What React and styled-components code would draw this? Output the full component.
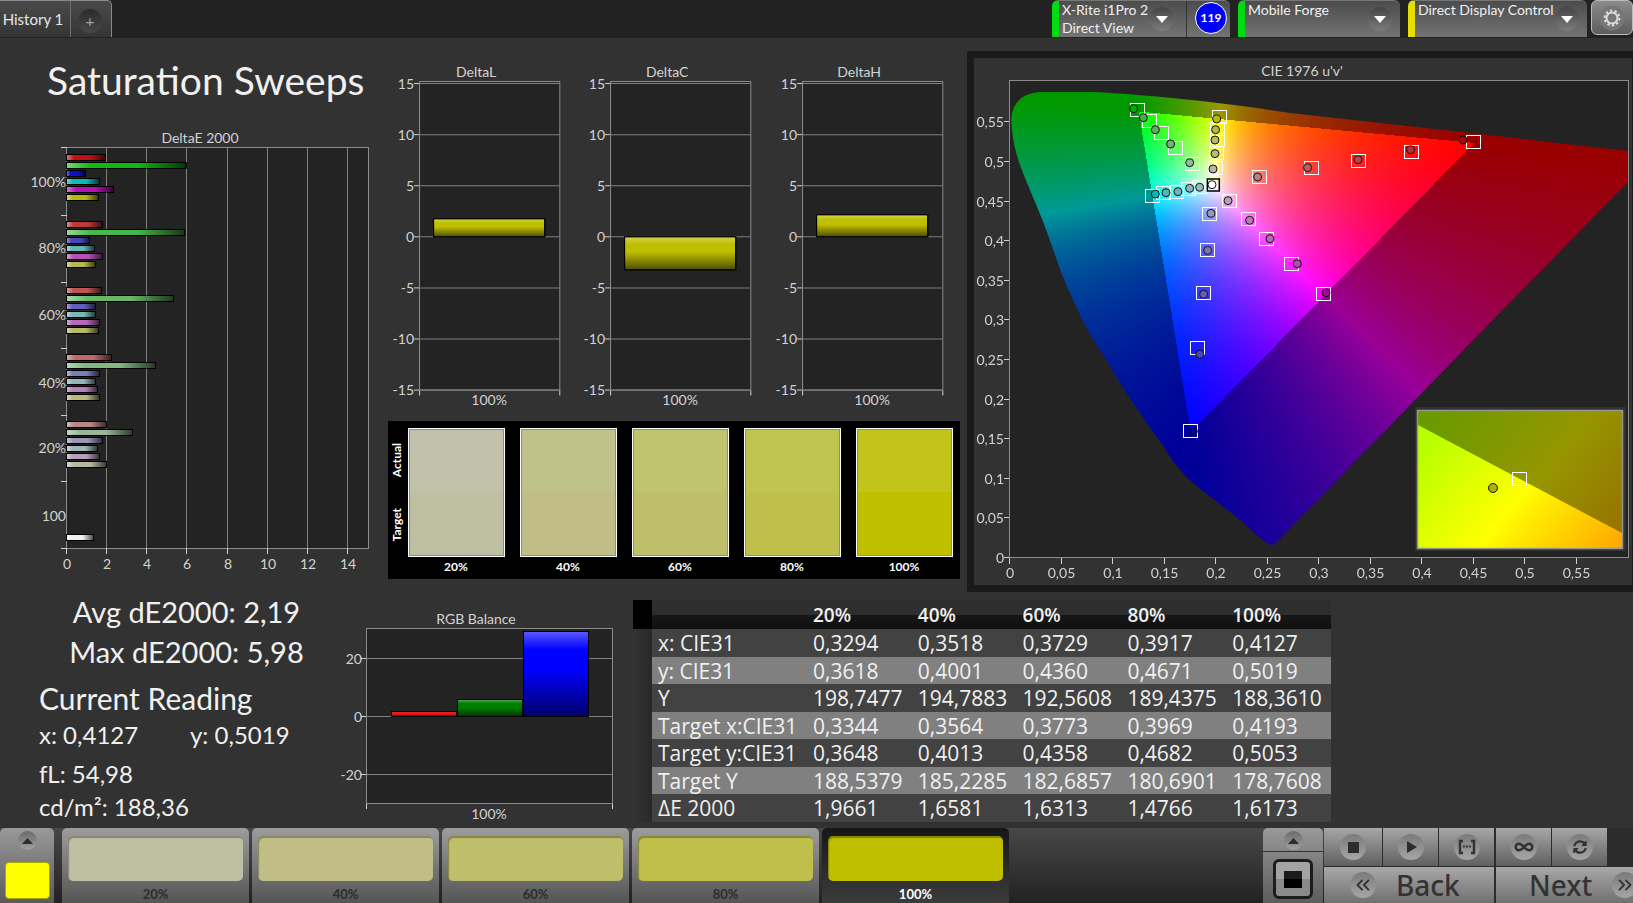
import React, { useLayoutEffect, useRef } from "react";
import styled, { createGlobalStyle } from "styled-components";
import { ChevronsLeft, ChevronsRight, Infinity as InfinityIcon } from "lucide-react";
import { FaSyncAlt } from "react-icons/fa";

const GlobalStyle = createGlobalStyle`
  *, *::before, *::after { box-sizing: border-box; }
  body {
    margin: 0;
    background: #323232;
    color: #f0f0f0;
    font-family: Lato, "Open Sans", sans-serif;
    overflow-x: hidden;
  }
  button { font: inherit; color: inherit; border: 0; padding: 0; cursor: pointer; }
  h1, h2, p { margin: 0; font-weight: 400; }
`;

/* ---------- page frame ---------- */

const Page = styled.div`
  display: flex;
  flex-direction: column;
  min-height: 100vh;
`;

const Main = styled.main`
  flex: 1;
`;

const UpperArea = styled.section`
  display: grid;
  grid-template-columns: minmax(0, 388fr) minmax(0, 572fr) 7px minmax(0, 666fr);
  align-items: start;
`;

const LowerArea = styled.section`
  display: grid;
  grid-template-columns: minmax(0, 340fr) minmax(0, 293fr) minmax(0, 698fr) minmax(0, 302fr);
  align-items: start;
  padding-top: 8px;
`;

/* ---------- top bar ---------- */

const TopBar = styled.header`
  display: flex;
  justify-content: space-between;
  height: 38px;
  background: #222;
`;

const Tabs = styled.nav`
  display: flex;
  height: 37px;
  border-top: 1px solid #8a8a8a;
  border-right: 1px solid #8a8a8a;
  border-top-right-radius: 5px;
  background: linear-gradient(#4a4a4a, #353535);
`;

const Tab = styled.button`
  width: 71px;
  padding-right: 4px;
  border-right: 1px solid #6e6e6e;
  background: none;
  color: #e6e6e6;
  font-size: 15px;
  white-space: nowrap;
`;

const AddTab = styled.button`
  width: 24px;
  height: 24px;
  margin: 8px 9px 0 7px;
  border-radius: 50%;
  background: linear-gradient(#2c2c2c, #484848);
  color: #a0a0a0;
  font-size: 16px;
  line-height: 24px;
`;

const Devices = styled.div`
  display: flex;
  align-items: flex-start;
  height: 37px;
`;

const Device = styled.div`
  display: flex;
  width: ${(p) => p.$width}px;
  height: 37px;
  margin-right: ${(p) => p.$gap}px;
  border-top: 1px solid #777;
  border-left: 7px solid ${(p) => p.$status};
  border-radius: 6px 6px 0 0;
  background: linear-gradient(#4c4c4c, #747474);
`;

const DeviceButton = styled.button`
  display: flex;
  flex: 1;
  min-width: 0;
  justify-content: space-between;
  padding: 0 ${(p) => (p.$split ? 12 : 8)}px 0 3px;
  background: none;
  text-align: left;
  font-size: 14px;
  line-height: 18px;
  white-space: nowrap;
`;

const DeviceName = styled.span`
  width: 88px;
`;

const RoundArrow = styled.span`
  display: flex;
  flex: none;
  align-items: center;
  justify-content: center;
  width: 24px;
  height: 24px;
  margin-top: 6px;
  border-radius: 50%;
  background: linear-gradient(#444, #7c7c7c);
`;

const BadgeSlot = styled.div`
  width: 44px;
  padding: 1px 0 0 8px;
  border-left: 1px solid #333;
`;

const Badge = styled.span`
  display: block;
  width: 32px;
  height: 32px;
  border: 1px solid #fff;
  border-radius: 50%;
  background: #00f;
  color: #fff;
  font-size: 12px;
  font-weight: 700;
  line-height: 30px;
  text-align: center;
`;

const SettingsButton = styled.button`
  display: flex;
  align-items: center;
  justify-content: center;
  width: 42px;
  height: 35px;
  border: 1px solid #bbb;
  border-radius: 6px;
  background: linear-gradient(#8c8c8c, #5c5c5c);
`;

/* ---------- left column ---------- */

const Title = styled.h1`
  padding: 14px 0 0 47px;
  height: 88px;
  font-size: 39px;
  line-height: 56px;
  white-space: nowrap;
`;

const Chart = styled.svg`
  display: block;
  width: 100%;
  height: auto;
  text {
    font-family: Lato, "Open Sans", sans-serif;
    font-size: 14px;
    fill: #d2d2d2;
  }
`;

/* ---------- middle column ---------- */

const Middle = styled.div`
  padding-top: 22px;
`;

const DeltaRow = styled.div`
  display: grid;
  grid-template-columns: repeat(3, minmax(0, 1fr));
  margin-right: -2px;
`;

const SwatchPanel = styled.div`
  display: grid;
  grid-template-columns: 12px repeat(5, minmax(0, 1fr));
  margin-top: 4px;
  height: 158px;
  padding-top: 7px;
  background: #000;
  color: #fff;
  font-size: 12px;
  font-weight: 700;
`;

const SideLabels = styled.div`
  display: flex;
  flex-direction: column;
  justify-content: space-around;
  align-items: center;
  width: 17px;
  height: 129px;
  line-height: 14px;
  span { writing-mode: vertical-rl; transform: rotate(180deg); }
`;

const SwatchItem = styled.div`
  text-align: center;
  line-height: 20px;
`;

const Comparison = styled.div`
  height: 129px;
  margin: 0 7px 0 8px;
  border: 1px solid #fff;
  box-shadow: inset 0 0 0 1px #8f8f70;
  background: linear-gradient(${(p) => p.$actual} 50%, ${(p) => p.$target} 50%);
`;

/* ---------- chromaticity ---------- */

const CiePanel = styled.div`
  margin-top: 13px;
  border: 7px solid #1a1a1a;
  border-right-width: 1px;
`;

const SpectrumCanvas = styled.canvas`
  display: block;
  width: 619px;
  height: 476px;
`;

/* ---------- lower area ---------- */

const Stats = styled.div`
  padding-left: 39px;
  font-size: 24px;
  line-height: 33px;
  white-space: nowrap;
`;

const Summary = styled.div`
  margin: -8px 6px 0 0;
  font-size: 29px;
  line-height: 40px;
  text-align: center;
`;

const ReadingTitle = styled.h2`
  padding-top: 6px;
  font-size: 30px;
  line-height: 40px;
`;

const ReadingRow = styled.div`
  display: flex;
  margin-bottom: 6px;
  span { flex: 0 0 151px; }
`;

const DataTable = styled.table`
  width: 100%;
  table-layout: fixed;
  border-collapse: collapse;
  font-family: "Open Sans", "Noto Sans", sans-serif;
  font-size: 21px;
  color: #f0f0f0;
  th, td { padding: 0 0 0 6px; text-align: left; font-weight: 400; line-height: 26px; white-space: nowrap; }
  thead th {
    height: 29px;
    font-size: 19px;
    font-weight: 600;
    background: linear-gradient(#2e2e2e 50%, #171717 50%, #101010);
  }
  thead th:first-child { background: #000; }
  tbody td:first-child { background: linear-gradient(90deg, #343434, #282828); }
`;

const DataRow = styled.tr`
  height: ${(p) => (p.$light ? 27 : 28)}px;
  background: ${(p) => (p.$light ? "#808080" : "#424242")};
`;

/* ---------- bottom bar ---------- */

const BottomBar = styled.footer`
  display: flex;
  height: 75px;
  background: linear-gradient(#484848, #222);
  overflow: hidden;
`;

const CornerCell = styled.div`
  display: flex;
  flex-direction: column;
  align-items: center;
  flex: 0 0 54px;
  margin-right: 8px;
  padding-top: 3px;
  border-radius: 5px 5px 0 0;
  background: linear-gradient(#999, #5a5a5a);
`;

const ExpandButton = styled.button`
  display: flex;
  align-items: center;
  justify-content: center;
  width: 19px;
  height: 19px;
  border-radius: 50%;
  background: linear-gradient(#6a6a6a, #a0a0a0);
`;

const CurrentColor = styled.div`
  width: 45px;
  height: 37px;
  margin-top: 12px;
  border: 1px solid #a8a800;
  border-radius: 4px;
  background: #ff0;
`;

const LevelList = styled.div`
  display: flex;
  gap: 3px;
`;

const LevelButton = styled.button`
  display: flex;
  flex-direction: column;
  width: 187px;
  height: 75px;
  padding: 8px 6px 0;
  border-radius: 5px 5px 0 0;
  background: ${(p) => (p.$active ? "linear-gradient(#161616, #3c3c3c)" : "linear-gradient(#9c9c9c, #555)")};
  color: ${(p) => (p.$active ? "#fff" : "#2c2c2c")};
  font-size: 13px;
  font-weight: 700;
  line-height: 14px;
`;

const LevelColor = styled.span`
  width: 100%;
  height: 45px;
  margin-bottom: 6px;
  border-radius: 5px;
  background: ${(p) => p.$color};
  box-shadow: inset 1px 2px 1px rgba(0, 0, 0, 0.3);
`;

const LevelLabel = styled.span`
  width: 100%;
  text-align: center;
`;

const StopCell = styled.div`
  flex: 0 0 60px;
  margin-left: auto;
  border-radius: 5px 5px 0 0;
  background: linear-gradient(#999, #5c5c5c);
`;

const StopTop = styled.div`
  display: flex;
  justify-content: center;
  height: 24px;
  padding-top: 3px;
  border-bottom: 1px solid #333;
`;

const PatternButton = styled.button`
  display: flex;
  align-items: center;
  justify-content: center;
  width: 40px;
  height: 40px;
  margin: 7px auto 0;
  border: 3px solid #1c1c1c;
  border-radius: 6px;
  background: linear-gradient(#a4a4a4 50%, #8a8a8a 50%);
  &::before { content: ""; width: 18px; height: 17px; background: linear-gradient(#1c1c1c 50%, #000 50%); }
`;

const Transport = styled.div`
  display: grid;
  grid-template-columns: 170px 137px;
  column-gap: 2px;
  flex: 0 0 309px;
  margin-left: 1px;
  background: #2c2c2c;
`;

const TransportHalf = styled.div`
  display: flex;
  flex-direction: column;
  gap: 1px;
  overflow: hidden;
`;

const TransportRow = styled.div`
  display: flex;
  gap: 1px;
`;

const TransportButton = styled.button`
  display: flex;
  align-items: center;
  justify-content: center;
  flex: 0 0 ${(p) => p.$width}px;
  height: 38px;
  background: linear-gradient(#a6a6a6, #606060);
`;

const NavButton = styled.button`
  display: flex;
  align-items: center;
  gap: 20px;
  width: 190px;
  height: 36px;
  padding-left: ${(p) => p.$indent}px;
  background: linear-gradient(#a8a8a8, #707070);
  color: #333;
  font-family: "Noto Sans", "Open Sans", sans-serif;
  font-size: 28px;
  font-weight: 500;
  line-height: 36px;
`;

const RoundIcon = styled.span`
  display: flex;
  flex: none;
  align-items: center;
  justify-content: center;
  width: 26px;
  height: 26px;
  border-radius: 50%;
  background: linear-gradient(#7a7a7a, #a6a6a6);
  color: #333;
`;

/* ---------- data ---------- */

const SATURATION_GROUPS = [
  { label: "100%", y: 28, labelY: 61, bars: [[1.95, "#c01010"], [5.98, "#10b810"], [0.95, "#1010c0"], [1.65, "#10b8b8"], [2.35, "#b810b8"], [1.6, "#b8b810"]] },
  { label: "80%", y: 95, labelY: 127, bars: [[1.8, "#c03838"], [5.9, "#48b848"], [1.15, "#4848b8"], [1.4, "#60b8b8"], [1.8, "#b850b8"], [1.45, "#b8b850"]] },
  { label: "60%", y: 161, labelY: 194, bars: [[1.75, "#c05454"], [5.35, "#68b868"], [1.45, "#6060b8"], [1.45, "#78b8b8"], [1.65, "#b868b8"], [1.6, "#b8b868"]] },
  { label: "40%", y: 228, labelY: 262, bars: [[2.25, "#c06868"], [4.45, "#80b880"], [1.65, "#7c7cb8"], [1.45, "#90b8b8"], [1.55, "#b880b8"], [1.65, "#b8b880"]] },
  { label: "20%", y: 295, labelY: 327, bars: [[2, "#b88888"], [3.3, "#98b898"], [1.8, "#9898b8"], [1.55, "#a0b8b8"], [1.65, "#b8a0b8"], [2, "#b8b8a0"]] },
  { label: "100", y: 408, labelY: 395, bars: [[1.35, "#f0f0f0"]] },
];

const DELTAS = [
  { name: "DeltaL", value: 1.75 },
  { name: "DeltaC", value: -3.25 },
  { name: "DeltaH", value: 2.15 },
];

const LEVELS = [
  { label: "20%", actual: "#c1c2a9", target: "#bfbfa3" },
  { label: "40%", actual: "#c0c28b", target: "#c0be86" },
  { label: "60%", actual: "#c0c46f", target: "#bfbe6a" },
  { label: "80%", actual: "#c0c450", target: "#bfbf4c" },
  { label: "100%", actual: "#c2c41c", target: "#bfbf00" },
];

const TABLE_ROWS = [
  ["x: CIE31", "0,3294", "0,3518", "0,3729", "0,3917", "0,4127"],
  ["y: CIE31", "0,3618", "0,4001", "0,4360", "0,4671", "0,5019"],
  ["Y", "198,7477", "194,7883", "192,5608", "189,4375", "188,3610"],
  ["Target x:CIE31", "0,3344", "0,3564", "0,3773", "0,3969", "0,4193"],
  ["Target y:CIE31", "0,3648", "0,4013", "0,4358", "0,4682", "0,5053"],
  ["Target Y", "188,5379", "185,2285", "182,6857", "180,6901", "178,7608"],
  ["ΔE 2000", "1,9661", "1,6581", "1,6313", "1,4766", "1,6173"],
];

/* [target u', target v', actual u', actual v', fill] */
const READINGS = [
  [0.1246, 0.5644, 0.12, 0.5661, "#00b000"], [0.1359, 0.5501, 0.1294, 0.5547, "#40b040"],
  [0.1475, 0.5349, 0.1411, 0.5395, "#60b060"], [0.1615, 0.5164, 0.1559, 0.5215, "#78b078"],
  [0.1776, 0.4962, 0.1744, 0.4979, "#98b898"],
  [0.2035, 0.5556, 0.2006, 0.553, "#b8b800"], [0.2022, 0.54, 0.1996, 0.5395, "#b8b840"],
  [0.2022, 0.5265, 0.199, 0.5265, "#b8b860"], [0.2013, 0.5097, 0.199, 0.5093, "#b8b880"],
  [0.2, 0.4916, 0.1971, 0.4899, "#b8b8a0"],
  [0.1385, 0.4562, 0.1411, 0.4583, "#00b8b8"], [0.1498, 0.4596, 0.1515, 0.46, "#50b8b8"],
  [0.1621, 0.4613, 0.1631, 0.4613, "#70b8b8"], [0.1741, 0.4646, 0.1744, 0.4655, "#88b8b8"],
  [0.1848, 0.4668, 0.1841, 0.4668, "#a0b8b8"],
  [0.2427, 0.4798, 0.2404, 0.4798, "#b88080"], [0.2928, 0.4916, 0.2889, 0.4916, "#b86060"],
  [0.3391, 0.5, 0.3379, 0.5017, "#b84848"], [0.3899, 0.5114, 0.3889, 0.5143, "#b83030"],
  [0.4501, 0.5244, 0.4398, 0.5265, "#b80000"],
  [0.1945, 0.4331, 0.1951, 0.4339, "#9898b8"], [0.1919, 0.388, 0.1919, 0.3872, "#7878b8"],
  [0.188, 0.3333, 0.188, 0.3317, "#6060b8"], [0.183, 0.2639, 0.1843, 0.2559, "#4848b8"],
  [0.1755, 0.1591, 0.178, 0.1587, "#0000a0"],
  [0.2136, 0.4499, 0.2117, 0.4499, "#b8a0b8"], [0.2317, 0.4268, 0.2326, 0.4251, "#b880b8"],
  [0.2498, 0.4015, 0.2524, 0.4019, "#b868b8"], [0.2741, 0.3699, 0.2789, 0.3703, "#b848b8"],
  [0.3045, 0.3321, 0.3068, 0.3337, "#a800a8"],
];

/* ---------- charts ---------- */

function BarShades() {
  return (
    <defs>
      <linearGradient id="shadeAcross">
        <stop offset="0" stopColor="#fff" stopOpacity="0.45" />
        <stop offset="0.2" stopColor="#fff" stopOpacity="0" />
        <stop offset="0.6" stopColor="#000" stopOpacity="0" />
        <stop offset="1" stopColor="#000" stopOpacity="0.7" />
      </linearGradient>
      <linearGradient id="shadeDown" x2="0" y2="1">
        <stop offset="0" stopColor="#fff" stopOpacity="0.35" />
        <stop offset="0.22" stopColor="#fff" stopOpacity="0" />
        <stop offset="0.45" stopColor="#000" stopOpacity="0" />
        <stop offset="1" stopColor="#000" stopOpacity="0.6" />
      </linearGradient>
    </defs>
  );
}

function Bar({ x, y, width, height, color, shade }) {
  return (
    <g stroke="#000">
      <rect x={x} y={y} width={width} height={height} fill={color} />
      <rect x={x} y={y} width={width} height={height} fill={`url(#${shade})`} />
    </g>
  );
}

function DeltaEChart() {
  const px = (v) => Math.round(67 + 20.07 * v);
  return (
    <Chart viewBox="0 0 388 454" role="img" aria-label="DeltaE 2000">
      <BarShades />
      <text x="200" y="17" textAnchor="middle">DeltaE 2000</text>
      <rect x="66.5" y="21.5" width="302" height="401" fill="#232323" stroke="#8c8c8c" />
      {[0, 2, 4, 6, 8, 10, 12, 14].map((v) => (
        <g key={v}>
          {v > 0 && <path d={`M${px(v) - 0.5} 22V422`} stroke="#808080" />}
          <path d={`M${px(v) - 0.5} 422v6`} stroke="#d0d0d0" />
          <text x={px(v)} y="443" textAnchor="middle">{v}</text>
        </g>
      ))}
      {[21, 89, 156, 222, 289, 355, 422].map((y) => (
        <path key={y} d={`M61 ${y + 0.5}h6`} stroke="#d0d0d0" />
      ))}
      {SATURATION_GROUPS.map((g) => (
        <g key={g.y}>
          <text x="66" y={g.labelY} textAnchor="end">{g.label}</text>
          {g.bars.map(([v, color], i) => (
            <Bar key={i} x={66.5} y={g.y + 8 * i + 0.5} width={20 * v} height={6} color={color} shade="shadeAcross" />
          ))}
        </g>
      ))}
    </Chart>
  );
}

function DeltaChart({ name, value }) {
  const py = (v) => Math.round(176 - 10.2 * v) + 0.5;
  return (
    <Chart viewBox="0 0 191 356" role="img" aria-label={name}>
      <text x="88" y="17" textAnchor="middle">{name}</text>
      <rect x="31.5" y="21.5" width="140" height="308" fill="#232323" stroke="#8c8c8c" />
      {[15, 10, 5, 0, -5, -10, -15].map((v) => (
        <g key={v}>
          <path d={`M32 ${py(v)}h139`} stroke="#808080" />
          <path d={`M26 ${py(v)}h5`} stroke="#d0d0d0" />
          <text x="26" y={py(v) + 5} textAnchor="end">{v}</text>
        </g>
      ))}
      <path d="M31.5 330v5M171.5 330v5" stroke="#d0d0d0" />
      <Bar x={45.5} y={Math.min(py(0), py(value))} width={111} height={Math.abs(py(0) - py(value))} color="#bfbf00" shade="shadeDown" />
      <text x="101" y="344" textAnchor="middle">100%</text>
    </Chart>
  );
}

function RgbChart() {
  return (
    <Chart viewBox="0 0 293 228" role="img" aria-label="RGB Balance">
      <text x="136" y="24" textAnchor="middle">RGB Balance</text>
      <rect x="26.5" y="28.5" width="246" height="175" fill="#232323" stroke="#8c8c8c" />
      {[[20, 58.5], [0, 116.5], [-20, 174.5]].map(([v, y]) => (
        <g key={v}>
          <path d={`M27 ${y}h245`} stroke="#808080" />
          <path d={`M21 ${y}h5`} stroke="#d0d0d0" />
          <text x="22" y={y + 5} textAnchor="end">{v}</text>
        </g>
      ))}
      <path d="M26.5 204v5M272.5 204v5" stroke="#d0d0d0" />
      <Bar x={51.5} y={111.5} width={65} height={5} color="#f01818" shade="shadeDown" />
      <Bar x={117.5} y={99.5} width={65} height={17} color="#008000" shade="shadeDown" />
      <Bar x={183.5} y={31.5} width={65} height={85} color="#0000ff" shade="shadeDown" />
      <text x="149" y="219" textAnchor="middle">100%</text>
    </Chart>
  );
}

const U_SCALE = 1030;
const V_SCALE = 792;
const PLOT_W = 619;
const PLOT_H = 476;

/* Fills the u'v' plane with display colours, dimmed outside the Rec. 709 triangle. */
function paintChromaticity(ctx) {
  const image = ctx.createImageData(PLOT_W, PLOT_H);
  for (let j = 0; j < PLOT_H; j++) {
    for (let i = 0; i < PLOT_W; i++) {
      const u = (i + 0.5) / U_SCALE;
      const v = Math.max((PLOT_H - j - 0.5) / V_SCALE, 0.001);
      const X = (9 * u) / (4 * v);
      const Z = (12 - 3 * u - 20 * v) / (4 * v);
      const lin = [
        3.2406 * X - 1.5372 - 0.4986 * Z,
        -0.9689 * X + 1.8758 + 0.0415 * Z,
        0.0557 * X - 0.204 + 1.057 * Z,
      ];
      const peak = Math.max(...lin);
      const level = Math.min(...lin) < 0 ? 153 : 255;
      const at = (j * PLOT_W + i) * 4;
      for (let k = 0; k < 3; k++) image.data[at + k] = (level * Math.max(lin[k], 0)) / peak;
      image.data[at + 3] = 255;
    }
  }
  ctx.putImageData(image, 0, 0);
}

const LOCUS =
  "M2 49C1 40 1 34 3 29C7 18 16 11 34 11L85 11C140 14 210 21 280 32L470 53L618 70V101L473 249L266 462Q262 466 257 462L250 457C225 433 205 420 182 401C170 390 160 377 154 366C135 340 120 318 105 294C92 270 84 262 73 240C66 226 60 212 53 196C45 175 38 152 30 133C18 102 5 80 2 49Z";

function CieChart() {
  const canvas = useRef(null);
  useLayoutEffect(() => paintChromaticity(canvas.current.getContext("2d")), []);
  const px = (u) => 36 + U_SCALE * u;
  const py = (v) => 499 - V_SCALE * v;
  const label = (n) => String(n / 100).replace(".", ",");
  return (
    <Chart viewBox="0 0 658 527" role="img" aria-label="CIE 1976 u'v' chromaticity">
      <defs>
        <clipPath id="locus"><path d={LOCUS} /></clipPath>
        <linearGradient id="insetBright" gradientUnits="userSpaceOnUse" x1="452" y1="385" x2="616" y2="520">
          <stop offset="0" stopColor="#b8ff00" />
          <stop offset="0.5" stopColor="#ffff00" />
          <stop offset="0.58" stopColor="#fff000" />
          <stop offset="1" stopColor="#ffaa00" />
        </linearGradient>
        <linearGradient id="insetDim" gradientUnits="userSpaceOnUse" x1="470" y1="345" x2="650" y2="480">
          <stop offset="0" stopColor="#6a9a00" />
          <stop offset="0.55" stopColor="#969600" />
          <stop offset="1" stopColor="#967000" />
        </linearGradient>
      </defs>
      <text x="328" y="18" textAnchor="middle">CIE 1976 u'v'</text>
      <rect x="35.5" y="22.5" width="619" height="477" fill="#232323" stroke="#8c8c8c" />
      <g transform="translate(36 23)">
        <g clipPath="url(#locus)">
          <foreignObject width={PLOT_W} height={PLOT_H}>
            <SpectrumCanvas ref={canvas} width={PLOT_W} height={PLOT_H} />
          </foreignObject>
        </g>
      </g>
      <path d="M654.5 23v476" stroke="#8c8c8c" />
      {[0, 5, 10, 15, 20, 25, 30, 35, 40, 45, 50, 55].map((n) => (
        <g key={n}>
          <path d={`M${Math.round(px(n / 100)) - 0.5} 500v6M30 ${Math.round(py(n / 100)) + 0.5}h5`} stroke="#d0d0d0" />
          <text x={px(n / 100)} y="520" textAnchor="middle">{label(n)}</text>
          <text x="30" y={py(n / 100) + 6} textAnchor="end">{label(n)}</text>
        </g>
      ))}
      {READINGS.map(([tu, tv], i) => (
        <rect key={i} x={Math.round(px(tu)) - 7.5} y={Math.round(py(tv)) - 6.5} width="14" height="13" fill="none" stroke="#fff" />
      ))}
      <rect x={px(0.1974) - 6} y={py(0.4697) - 6} width="12" height="12" fill="none" stroke="#000" strokeWidth="1.5" />
      {READINGS.map(([, , u, v, color], i) => (
        <circle key={i} cx={px(u)} cy={py(v)} r="4" fill={color} stroke="#111" />
      ))}
      <circle cx={px(0.1961)} cy={py(0.4701)} r="4" fill="#fff" stroke="#111" />
      <rect x="441" y="349" width="211" height="144" fill="#323232" />
      <rect x="444" y="353" width="204" height="138" fill="url(#insetDim)" />
      <path d="M444 367L648 475V491H444Z" fill="url(#insetBright)" />
      <rect x="443.5" y="352.500" width="205" height="138" fill="none" stroke="#98988a" strokeWidth="1.5" />
      <rect x="538.5" y="414.5" width="14" height="13" fill="none" stroke="#fff" />
      <circle cx="519" cy="430" r="4.5" fill="#b0b000" stroke="#111" />
    </Chart>
  );
}

/* ---------- small icons ---------- */

const DownArrow = () => (
  <RoundArrow>
    <svg width="12" height="7" viewBox="0 0 12 7" aria-hidden="true"><path d="M0 0H12L6 7Z" fill="#fff" /></svg>
  </RoundArrow>
);

const UpArrow = () => (
  <svg width="11" height="6" viewBox="0 0 11 6" aria-hidden="true"><path d="M0 6L5.5 0L11 6Z" fill="#2c2c2c" /></svg>
);

const GearIcon = () => (
  <svg width="26" height="26" viewBox="0 0 26 26" aria-hidden="true">
    <circle cx="13" cy="13" r="12.5" fill="#777" />
    <circle cx="13" cy="13" r="5.5" fill="none" stroke="#ddd" strokeWidth="2" />
    <circle cx="13" cy="13" r="7.4" fill="none" stroke="#ddd" strokeWidth="2" strokeDasharray="2.4 2.25" />
  </svg>
);

const StopIcon = () => (
  <svg width="12" height="12" viewBox="0 0 12 12" aria-hidden="true"><rect x="1" y="1" width="11" height="11" fill="#2c2c2c" /></svg>
);

const PlayIcon = () => (
  <svg width="14" height="14" viewBox="0 0 14 14" aria-hidden="true"><path d="M3 1L13 7L3 13Z" fill="#2c2c2c" /></svg>
);

const RangeIcon = () => (
  <svg width="18" height="16" viewBox="0 0 18 16" fill="none" stroke="#333" strokeWidth="2.4" aria-hidden="true">
    <path d="M5 2H2V14H5M13 2H16V14H13" />
    <path d="M5 7.500h2M8 7.500h2M11 7.500h2" strokeWidth="2" />
  </svg>
);

/* ---------- app ---------- */

export default function App() {
  return (
    <Page>
      <GlobalStyle />
      <TopBar>
        <Tabs>
          <Tab>History 1</Tab>
          <AddTab aria-label="Add history tab">+</AddTab>
        </Tabs>
        <Devices>
          <Device $width={178} $gap={8} $status="#00dc10">
            <DeviceButton $split aria-haspopup="menu">
              <DeviceName>X-Rite i1Pro 2<br />Direct View</DeviceName>
              <DownArrow />
            </DeviceButton>
            <BadgeSlot><Badge>119</Badge></BadgeSlot>
          </Device>
          <Device $width={162} $gap={8} $status="#00dc10">
            <DeviceButton aria-haspopup="menu">Mobile Forge<DownArrow /></DeviceButton>
          </Device>
          <Device $width={179} $gap={4} $status="#e6de00">
            <DeviceButton aria-haspopup="menu">Direct Display Control<DownArrow /></DeviceButton>
          </Device>
          <SettingsButton aria-label="Settings"><GearIcon /></SettingsButton>
        </Devices>
      </TopBar>

      <Main>
        <UpperArea>
          <div>
            <Title>Saturation Sweeps</Title>
            <DeltaEChart />
          </div>
          <Middle>
            <DeltaRow>
              {DELTAS.map((d) => <DeltaChart key={d.name} {...d} />)}
            </DeltaRow>
            <SwatchPanel>
              <SideLabels><span>Actual</span><span>Target</span></SideLabels>
              {LEVELS.map((l) => (
                <SwatchItem key={l.label}>
                  <Comparison $actual={l.actual} $target={l.target} />
                  {l.label}
                </SwatchItem>
              ))}
            </SwatchPanel>
          </Middle>
          <div />
          <CiePanel><CieChart /></CiePanel>
        </UpperArea>

        <LowerArea>
          <Stats>
            <Summary>
              <p>Avg dE2000: 2,19</p>
              <p>Max dE2000: 5,98</p>
            </Summary>
            <ReadingTitle>Current Reading</ReadingTitle>
            <ReadingRow><span>x: 0,4127</span><span>y: 0,5019</span></ReadingRow>
            <p>fL: 54,98</p>
            <p>cd/m²: 188,36</p>
          </Stats>
          <RgbChart />
          <DataTable>
            <colgroup>
              <col style={{ width: "19px" }} />
              <col style={{ width: "155px" }} />
              <col /><col /><col /><col /><col />
            </colgroup>
            <thead>
              <tr>
                <th /><th />
                {LEVELS.map((l) => <th key={l.label} scope="col">{l.label}</th>)}
              </tr>
            </thead>
            <tbody>
              {TABLE_ROWS.map(([name, ...values], i) => (
                <DataRow key={name} $light={i % 2 === 1}>
                  <td />
                  <th scope="row">{name}</th>
                  {values.map((v, k) => <td key={k}>{v}</td>)}
                </DataRow>
              ))}
            </tbody>
          </DataTable>
        </LowerArea>
      </Main>

      <BottomBar>
        <CornerCell>
          <ExpandButton aria-label="Expand colours"><UpArrow /></ExpandButton>
          <CurrentColor />
        </CornerCell>
        <LevelList>
          {LEVELS.map((l, i) => (
            <LevelButton key={l.label} $active={i === 4}>
              <LevelColor $color={l.target} />
              <LevelLabel>{l.label}</LevelLabel>
            </LevelButton>
          ))}
        </LevelList>
        <StopCell>
          <StopTop><ExpandButton aria-label="Expand patterns"><UpArrow /></ExpandButton></StopTop>
          <PatternButton aria-label="Pattern window" />
        </StopCell>
        <Transport>
          <TransportHalf>
            <TransportRow>
              <TransportButton $width={58} aria-label="Stop"><RoundIcon><StopIcon /></RoundIcon></TransportButton>
              <TransportButton $width={55} aria-label="Play"><RoundIcon><PlayIcon /></RoundIcon></TransportButton>
              <TransportButton $width={55} aria-label="Read series"><RoundIcon><RangeIcon /></RoundIcon></TransportButton>
            </TransportRow>
            <NavButton $indent={26}><RoundIcon><ChevronsLeft size={22} /></RoundIcon>Back</NavButton>
          </TransportHalf>
          <TransportHalf>
            <TransportRow>
              <TransportButton $width={55} aria-label="Read continuously"><RoundIcon><InfinityIcon size={20} strokeWidth={3} /></RoundIcon></TransportButton>
              <TransportButton $width={55} aria-label="Refresh"><RoundIcon><FaSyncAlt size={14} /></RoundIcon></TransportButton>
            </TransportRow>
            <NavButton $indent={33}>Next<RoundIcon><ChevronsRight size={22} /></RoundIcon></NavButton>
          </TransportHalf>
        </Transport>
      </BottomBar>
    </Page>
  );
}
